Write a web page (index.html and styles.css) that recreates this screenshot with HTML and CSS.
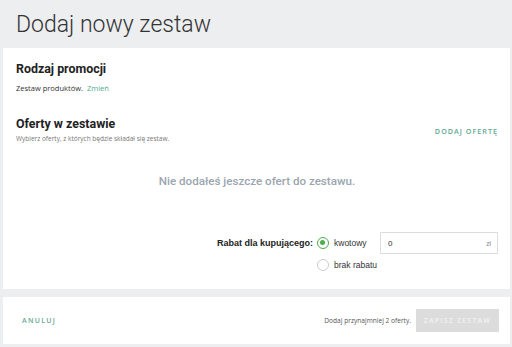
FILE: index.html
```html
<!DOCTYPE html>
<html lang="pl">
<head>
<meta charset="utf-8">
<link rel="stylesheet" href="styles.css">
</head>
<body>
<header class="page-head">
  <h1 class="title">Dodaj nowy zestaw</h1>
</header>
<main class="card">
  <section class="section">
    <h2 class="sec-title">Rodzaj promocji</h2>
    <p class="type-line">Zestaw produktów. <a class="link">Zmień</a></p>
  </section>
  <section class="section offers">
    <div class="offers-head">
      <div>
        <h2 class="sec-title">Oferty w zestawie</h2>
        <p class="hint">Wybierz oferty, z których będzie składał się zestaw.</p>
      </div>
      <a class="add-btn">DODAJ OFERTĘ</a>
    </div>
    <p class="empty">Nie dodałeś jeszcze ofert do zestawu.</p>
    <div class="discount">
      <div class="disc-label">Rabat dla kupującego:</div>
      <div class="disc-opts">
        <div class="opt-row">
          <label class="radio"><span class="dot on"></span>kwotowy</label>
          <div class="input"><span>0</span><span class="unit">zł</span></div>
        </div>
        <div class="opt-row">
          <label class="radio"><span class="dot"></span>brak rabatu</label>
        </div>
      </div>
    </div>
  </section>
</main>
<footer class="card footer">
  <a class="cancel">ANULUJ</a>
  <div class="foot-right">
    <span class="note">Dodaj przynajmniej 2 oferty.</span>
    <button class="save">ZAPISZ ZESTAW</button>
  </div>
</footer>
</body>
</html>
```
FILE: styles.css
```css
* { box-sizing: border-box; }
html, body { margin: 0; padding: 0; }
body {
  background: #eceef0;
  font-family: "Open Sans", "Liberation Sans", sans-serif;
  color: #333;
  width: 512px;
  height: 347px;
  overflow: hidden;
}
.page-head {
  height: 48px;
  padding-left: 16px;
  display: flex;
  align-items: center;
}
.title {
  margin: 0;
  font-family: Roboto, "Liberation Sans", sans-serif;
  font-weight: 300;
  font-size: 23px;
  color: #333;
}
.card {
  background: #fff;
  margin: 0 2px 0 3px;
}
main.card {
  height: 241px;
  padding: 13px 12px 0 13px;
}
.section { margin: 0; }
.sec-title {
  margin: 0;
  font-family: Roboto, "Liberation Sans", sans-serif;
  font-weight: 700;
  font-size: 12.4px;
  color: #222;
  line-height: 16px;
}
.type-line {
  margin: 5px 0 0;
  font-size: 7.5px;
  color: #333;
  line-height: 12px;
}
.link { color: #4fae8c; margin-left: 2px; }
.offers { margin-top: 22px; }
.offers-head {
  display: flex;
  justify-content: space-between;
  align-items: flex-end;
}
.hint {
  margin: 2px 0 0;
  font-size: 6.5px;
  color: #777;
  line-height: 10px;
}
.add-btn {
  font-size: 7.2px;
  font-weight: 600;
  letter-spacing: 1px;
  color: #5fa892;
  margin-bottom: 8px;
}
.empty {
  margin: 30px 0 0;
  text-align: center;
  font-family: Roboto, "Liberation Sans", sans-serif;
  font-weight: 500;
  font-size: 11.6px;
  color: #9ba6ae;
  line-height: 14px;
}
.discount {
  display: flex;
  margin-top: 44px;
  margin-left: 201px;
}
.disc-label {
  font-family: "Liberation Sans", Arial, sans-serif;
  font-weight: 700;
  font-size: 9px;
  color: #222;
  width: 101px;
  line-height: 22px;
}
.disc-opts { display: flex; flex-direction: column; }
.opt-row { display: flex; align-items: center; height: 22px; }
.radio {
  display: flex;
  align-items: center;
  gap: 5px;
  font-family: "Liberation Sans", Arial, sans-serif;
  font-size: 8.5px;
  color: #333;
  width: 63px;
}
.dot {
  width: 12px;
  height: 12px;
  border-radius: 50%;
  border: 1px solid #ccc;
  display: inline-block;
  position: relative;
}
.dot.on { border: 1.5px solid #4cae4c; }
.dot.on::after {
  content: "";
  position: absolute;
  left: 2px; top: 2px;
  width: 5px; height: 5px;
  border-radius: 50%;
  background: #4cae4c;
}
.input {
  width: 118px;
  height: 22px;
  border: 1px solid #ddd;
  display: flex;
  align-items: center;
  justify-content: space-between;
  padding: 0 6px 0 7px;
  font-family: "Liberation Sans", Arial, sans-serif;
  font-size: 8px;
  color: #333;
}
.unit { font-size: 6.5px; color: #888; }
.footer {
  margin-top: 8px;
  height: 47px;
  display: flex;
  align-items: center;
  justify-content: space-between;
  padding: 0 11px 0 19px;
}
.cancel {
  font-size: 7px;
  font-weight: 600;
  letter-spacing: 1.3px;
  color: #6aa796;
}
.foot-right { display: flex; align-items: center; gap: 5px; }
.note { font-size: 6.6px; color: #555; }
.save {
  width: 83px;
  height: 23px;
  border: none;
  background: #dcdcdc;
  color: #f2f2f2;
  font-family: "Open Sans", "Liberation Sans", sans-serif;
  font-size: 7px;
  font-weight: 600;
  letter-spacing: 1.2px;
  padding: 0;
}
```
